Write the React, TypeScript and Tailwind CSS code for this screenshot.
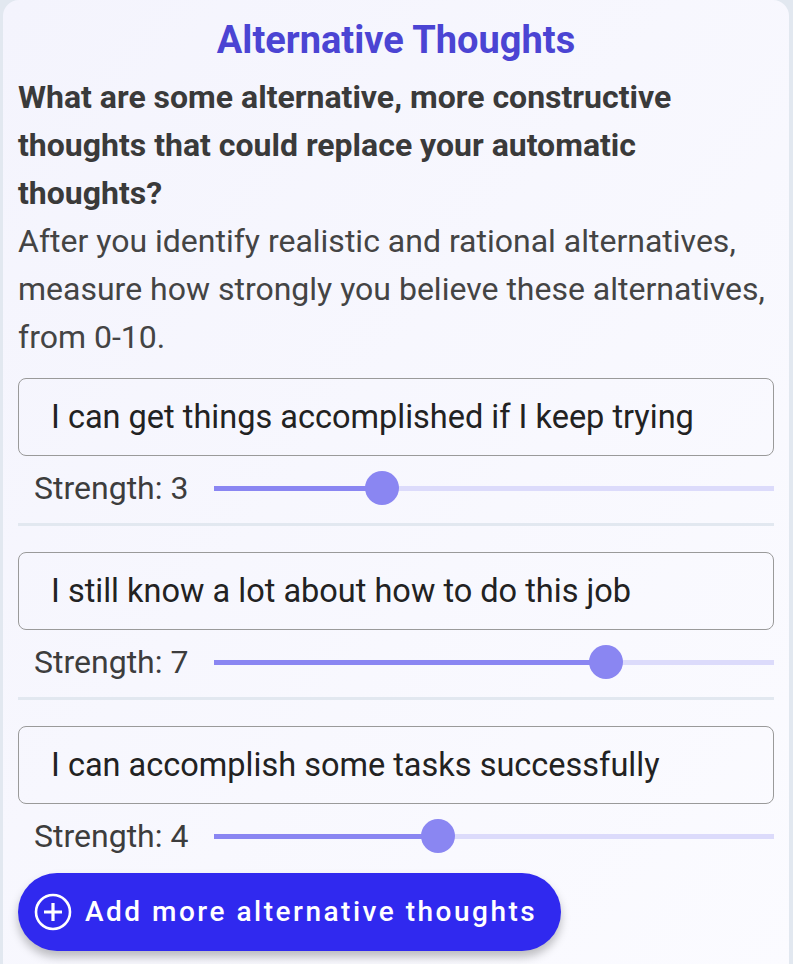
import React from "react";

const items = [
  { text: "I can get things accomplished if I keep trying", value: 3 },
  { text: "I still know a lot about how to do this job", value: 7 },
  { text: "I can accomplish some tasks successfully", value: 4 },
];

function Slider({ value }: { value: number }) {
  const pct = (value / 10) * 100;
  return (
    <div className="relative flex-1 h-[34px] flex items-center">
      <div className="relative w-full h-[5px] bg-[#dcdbfb]">
        <div className="absolute left-0 top-0 h-full bg-[#8a86f2]" style={{ width: `${pct}%` }} />
      </div>
      <div
        className="absolute top-0 w-[34px] h-[34px] rounded-full bg-[#8a86f2] -translate-x-1/2"
        style={{ left: `${pct}%` }}
      />
    </div>
  );
}

export default function App() {
  return (
    <div className="min-h-[964px] bg-[#e2e8f0] pl-[3px] pr-[4px]" style={{ fontFamily: "Roboto, 'Noto Sans', sans-serif" }}>
      <div className="min-h-[980px] rounded-2xl bg-gradient-to-br from-[#f4f4fd] to-[#fbfbff] px-[15px] pt-[16px] pb-[30px]">
        <h1 className="text-center text-[38px] leading-[48px] font-bold text-[#4b44d3] mb-[9px]">Alternative Thoughts</h1>
        <p className="text-[32px] leading-[48px] font-bold text-[#3a3a3a]">
          What are some alternative, more constructive thoughts that could replace your automatic thoughts?
        </p>
        <p className="text-[32px] leading-[48px] text-[#444444]">
          After you identify realistic and rational alternatives, measure how strongly you believe these alternatives, from 0-10.
        </p>
        <div className="mt-[17px] flex flex-col">
          {items.map((it, i) => (
            <div key={i} className="flex flex-col">
              <div className="h-[78px] rounded-[8px] border-[1.5px] border-[#9a9a9a] flex items-center pl-[32px] text-[32.5px] text-[#222222]">
                {it.text}
              </div>
              <div className="mt-[15px] flex items-center pl-[16px]">
                <span className="w-[180px] text-[32px] leading-[34px] text-[#3d3d3d]">Strength: {it.value}</span>
                <Slider value={it.value} />
              </div>
              {i < items.length - 1 ? (
                <div className="mt-[18px] mb-[26px] h-[3px] bg-[#e2e8f0]" />
              ) : null}
            </div>
          ))}
        </div>
        <button className="mt-[20px] h-[78px] w-[543px] rounded-full bg-[#3029ef] flex items-center pl-[16px] gap-[13px] text-white text-[28px] font-medium tracking-[2.5px] shadow-[0_6px_10px_rgba(0,0,0,0.25)]">
          <svg width="38" height="38" viewBox="0 0 38 38" fill="none">
            <circle cx="19" cy="19" r="17" stroke="white" strokeWidth="2.6" />
            <path d="M19 10v18M10 19h18" stroke="white" strokeWidth="3.2" />
          </svg>
          <span>Add more alternative thoughts</span>
        </button>
      </div>
    </div>
  );
}
